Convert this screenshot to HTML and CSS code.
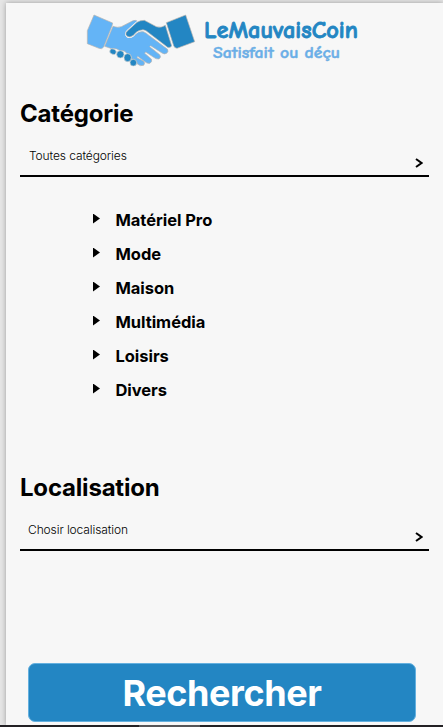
FILE: index.html
```html
<!DOCTYPE html>
<html lang="fr">
<head>
<meta charset="utf-8">
<title>LeMauvaisCoin</title>
<link rel="stylesheet" href="styles.css">
</head>
<body>
<main class="panel">
  <header class="brand">
    <svg class="hands" viewBox="0 0 360 210" aria-hidden="true">
      <g stroke="#b9b4ae" stroke-width="2" stroke-linejoin="round">
        <path class="light" d="M22 77 42 30 98 54 96 63 71 126Q65 134 57 130L22 116Z"/>
        <path class="dark" d="M259 53 317 30 344 110 291 130Q283 129 281 122Z"/>
        <path class="light" d="M99 64Q112 69 124 65L157 48Q166 43 174 50L139 80Q134 91 142 97Q151 101 162 92Q174 78 190 80Q198 83 208 92L262 132Q267 139 260 145Q253 149 246 144L212 122 209 125 239 149Q245 156 237 162Q228 163 221 157L197 141 194 145 214 162Q218 169 210 175Q201 177 193 169L173 154 171 158 190 168Q197 174 191 181Q181 185 172 177Q170 162 155 162Q155 146 140 145Q134 134 121 138Q111 128 95 131L74 124Z"/>
        <path class="gap" d="M138 89Q136 83 142 78L171 52Q180 46 193 46L229 65Q244 70 256 61L275 123Q270 129 263 127L198 77Q190 72 180 76Q171 78 160 91Q149 99 142 94Z"/>
        <path class="dark" d="M138 89Q136 83 142 78L171 52Q180 46 193 46L229 65Q244 70 256 61L275 123Q270 129 263 127L198 77Q190 72 180 76Q171 78 160 91Q149 99 142 94Z"/>
        <g class="fingers">
          <ellipse cx="99" cy="140" rx="10" ry="8" transform="rotate(25 99 140)"/>
          <ellipse cx="121" cy="148" rx="11" ry="11"/>
          <ellipse cx="143" cy="158" rx="11" ry="12"/>
          <ellipse cx="160" cy="173" rx="10" ry="10"/>
        </g>
      </g>
    </svg>
    <svg class="wordmark" viewBox="0 0 170 70">
      <text class="name" x="9" y="33" textLength="154" lengthAdjust="spacingAndGlyphs">LeMauvaisCoin</text>
      <text class="slogan" x="18" y="53" textLength="127" lengthAdjust="spacingAndGlyphs">Satisfait ou déçu</text>
    </svg>
  </header>

  <section class="filter">
    <h2>Catégorie</h2>
    <div class="select">
      <span>Toutes catégories</span>
      <svg class="chevron" viewBox="0 0 8 10"><path d="M1 1 6.500 5 1 9"/></svg>
    </div>
  </section>

  <ul class="categories">
    <li>Matériel Pro</li>
    <li>Mode</li>
    <li>Maison</li>
    <li>Multimédia</li>
    <li>Loisirs</li>
    <li>Divers</li>
  </ul>

  <section class="filter">
    <h2>Localisation</h2>
    <div class="select place">
      <span>Chosir localisation</span>
      <svg class="chevron" viewBox="0 0 8 10"><path d="M1 1 6.500 5 1 9"/></svg>
    </div>
  </section>

  <button class="search" type="button">Rechercher</button>
</main>
<footer class="edge"><div class="thumb"></div></footer>
</body>
</html>
```

FILE: styles.css
```css
* { box-sizing: border-box; }
body {
  margin: 0;
  height: 727px;
  padding: 3px 0 0 6px;
  overflow: hidden;
  background: #e5e5e5;
  color: #000;
  font-family: Inter, sans-serif;
}
.panel {
  height: 722px;
  padding: 2px 14px 0;
  background: #f7f7f7;
  box-shadow: 0 0 5px rgba(0, 0, 0, .32);
}
.brand {
  display: flex;
  height: 70px;
  margin-left: 60px;
}
.hands { width: 120px; height: 70px; flex: none; }
.wordmark { width: 170px; height: 70px; flex: none; margin-left: -5px; }
.light { fill: #64b4f6; }
.dark { fill: #2386c3; }
.gap { fill: none; stroke: #f7f7f7; stroke-width: 6px; }
.fingers { fill: #2386c3; stroke: #d5d3d0; }
.wordmark text {
  font-family: "Comic Sans MS", "Comic Neue", Lato, sans-serif;
  font-weight: 700;
}
.wordmark .name {
  font-size: 23.500px;
  fill: #2386c3;
  stroke: #2386c3;
  stroke-width: .8px;
}
.wordmark .slogan {
  font-size: 16px;
  fill: #64b0ef;
  stroke: #75aedd;
  stroke-width: .5px;
}

.filter { height: 102px; padding-top: 24px; }
.filter h2 {
  margin: 0;
  font-size: 24px;
  font-weight: 700;
  letter-spacing: -.2px;
  line-height: 30px;
}
.select {
  display: flex;
  justify-content: space-between;
  height: 48px;
  padding: 20px 6px 0 9px;
  border-bottom: 2px solid #000;
  font-size: 12px;
  font-weight: 300;
  letter-spacing: -.1px;
  line-height: 14px;
}
.select.place { padding-left: 8px; }
.chevron { width: 8px; height: 10px; margin-top: 9px; }
.chevron path { fill: none; stroke: #000; stroke-width: 2; }

.categories {
  height: 272px;
  margin: 0;
  padding: 26px 0 0 73px;
  list-style: none;
}
.categories li {
  display: flex;
  align-items: center;
  gap: 15.500px;
  height: 34px;
  font-size: 16.500px;
  font-weight: 700;
  letter-spacing: -.05px;
}
.categories li::before {
  content: "";
  width: 7px;
  height: 10px;
  margin-top: -3px;
  background: #000;
  clip-path: polygon(0 0, 100% 50%, 0 100%);
}
.search {
  display: block;
  width: 388px;
  height: 59px;
  margin: 112px 0 0 8px;
  padding: 2px 0 0;
  border: 1px solid #64b0df;
  border-radius: 7px;
  background: #2386c3;
  color: #fff;
  font: 700 36px/55px Inter, sans-serif;
  letter-spacing: -.4px;
}
.edge {
  height: 2px;
  margin-left: -6px;
  padding-left: 139px;
  background: #232124;
}
.thumb { width: 61px; height: 2px; background: #565557; }
```
